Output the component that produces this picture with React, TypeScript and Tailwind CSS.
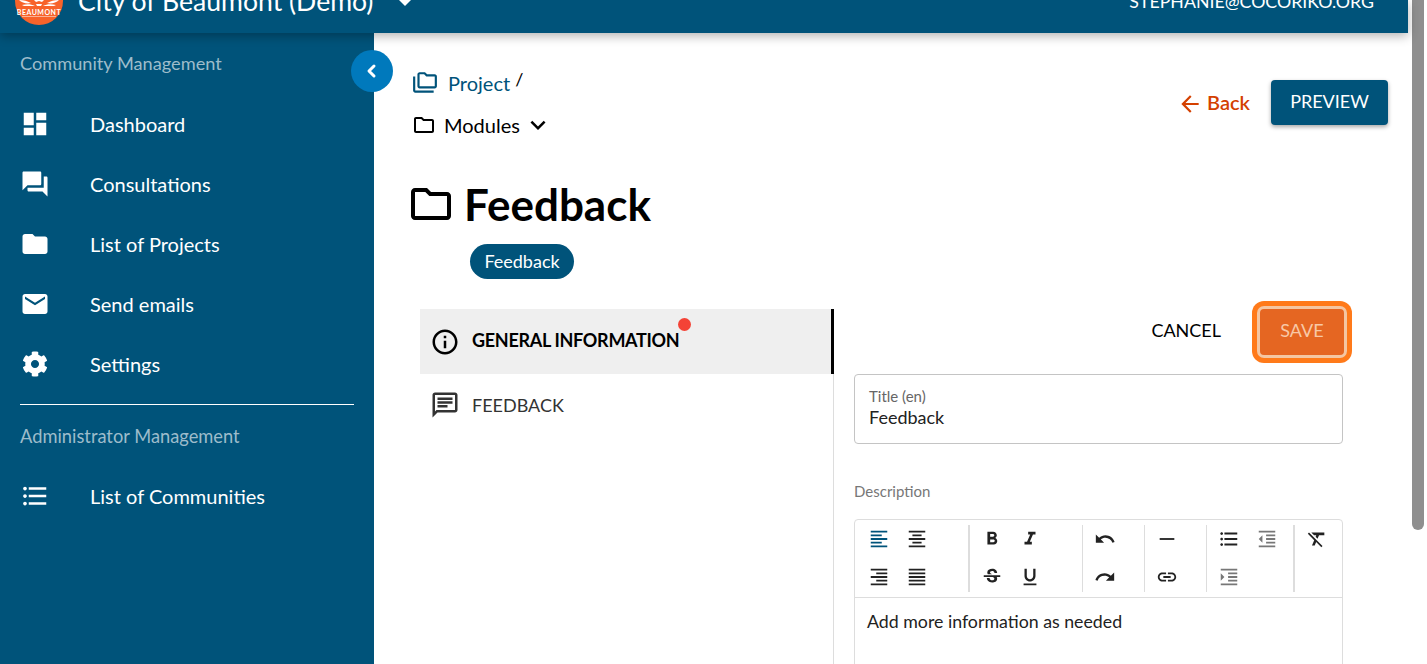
import type { ReactNode } from "react";
import {
  MdArrowBack,
  MdDashboard,
  MdEmail,
  MdExpandMore,
  MdFolder,
  MdForum,
  MdFormatAlignCenter,
  MdFormatAlignJustify,
  MdFormatAlignLeft,
  MdFormatAlignRight,
  MdFormatBold,
  MdFormatClear,
  MdFormatIndentDecrease,
  MdFormatIndentIncrease,
  MdFormatItalic,
  MdFormatListBulleted,
  MdFormatUnderlined,
  MdHorizontalRule,
  MdInfoOutline,
  MdLink,
  MdOutlineChat,
  MdOutlineFolder,
  MdOutlineFolderCopy,
  MdRedo,
  MdStrikethroughS,
  MdUndo,
} from "react-icons/md";
import { FaCog } from "react-icons/fa";

function NavItem({ icon, label }: { icon: ReactNode; label: string }) {
  return (
    <div className="flex h-[60px] items-center text-[20px] text-white">
      <div className="flex w-[90px] pl-5 text-[30px]">{icon}</div>
      {label}
    </div>
  );
}

function Tool({ children, faded }: { children: ReactNode; faded?: boolean }) {
  return (
    <div className={`flex h-[38px] w-[38px] items-center justify-center text-[22px] ${faded ? "text-[#777]" : "text-[#222]"}`}>
      {children}
    </div>
  );
}

function Divider({ thick }: { thick?: boolean }) {
  return <div className={`my-[5px] bg-[#ddd] ${thick ? "w-[2px]" : "w-px"}`} />;
}

function Logo() {
  return (
    <div className="mb-[8px] ml-[15px] flex h-[48px] w-[48px] shrink-0 flex-col items-center justify-end rounded-full bg-[#f7632a] pb-[8px]">
      <svg width="44" height="9" viewBox="0 0 44 9" className="text-white">
        <path d="M2 1c5 0 8 1 12 3-4 1-9 0-12-3zM42 1c-5 0-8 1-12 3 4 1 9 0 12-3zM16 0h12l-3 3-3-1-3 1zM5 6c5-1 9-1 13 1H7zM39 6c-5-1-9-1-13 1h11zM19 5h6l-1 2h-4z" fill="currentColor" />
      </svg>
      <span className="text-[7px] leading-[8px] font-bold tracking-[0.5px] text-white">BEAUMONT</span>
      <span className="h-px w-[34px] bg-white/50" />
    </div>
  );
}

export default function App() {
  return (
    <div className="flex h-[664px] w-[1427px] overflow-hidden bg-white font-['Lato','Liberation_Sans',sans-serif]">
      <div className="flex min-w-0 flex-1 flex-col">
        {/* header is scrolled partly off the page */}
        <header className="relative z-20 mr-[4px] flex h-[33px] shrink-0 items-end overflow-hidden bg-[#00537a] shadow-[0_3px_10px_rgba(0,0,0,0.3)]">
          <Logo />
          <div className="mb-[16px] ml-[15px] text-[26.6px] leading-[32px] whitespace-nowrap text-white">City of Beaumont (Demo)</div>
          <svg width="12" height="6" viewBox="0 0 12 6" className="mb-[27px] ml-[26px] text-white">
            <path d="M0 0h12L6 6z" fill="currentColor" />
          </svg>
          <div className="mb-[22px] ml-auto mr-[34px] text-[17.75px] leading-[20px] whitespace-nowrap text-white">STEPHANIE@COCORIKO.ORG</div>
        </header>

        <div className="flex min-h-0 flex-1">
          <aside className="relative w-[374px] shrink-0 bg-[#00537a]">
            <div className="px-5 pt-[19px] text-[18.2px] leading-[22px] text-[#9dbccb]">Community Management</div>
            <div className="mt-[20px]">
              <NavItem icon={<MdDashboard />} label="Dashboard" />
              <NavItem icon={<MdForum />} label="Consultations" />
              <NavItem icon={<MdFolder />} label="List of Projects" />
              <NavItem icon={<MdEmail />} label="Send emails" />
              <NavItem icon={<FaCog className="ml-[2px] text-[26px]" />} label="Settings" />
            </div>
            <div className="mx-5 mt-[10px] h-px bg-white" />
            <div className="px-5 pt-[20px] text-[18.3px] leading-[22px] text-[#9dbccb]">Administrator Management</div>
            <div className="mt-[19px]">
              <NavItem icon={<MdFormatListBulleted />} label="List of Communities" />
            </div>
            <button className="absolute top-[17px] right-[-19px] z-10 flex h-[42px] w-[42px] items-center justify-center rounded-full bg-[#0079bc] text-white">
              <svg width="20" height="20" viewBox="0 0 20 20" fill="none" stroke="currentColor" strokeWidth="3" strokeLinecap="round" strokeLinejoin="round">
                <path d="M12 5l-5 5 5 5" />
              </svg>
            </button>
          </aside>

          <main className="min-w-0 flex-1 overflow-hidden pl-[37px]">
            <div className="flex justify-between pr-[24px]">
              <div>
                <div className="mt-[36px] flex h-[28px] items-center text-[20px] text-[#00537a]">
                  <MdOutlineFolderCopy className="ml-[1px] text-[26px]" />
                  <span className="ml-[10px]">Project</span>
                  <span className="mb-[8px] ml-[5px] text-[18px] text-black">/</span>
                </div>
                <div className="mt-[14px] flex h-[28px] items-center text-[20px] text-black">
                  <MdOutlineFolder className="ml-[1px] text-[24px]" />
                  <span className="ml-[8px]">Modules</span>
                  <MdExpandMore className="ml-[3px] text-[30px]" />
                </div>
              </div>
              <div className="mt-[47px] flex items-start">
                <div className="mt-[7px] flex items-center text-[20px] font-semibold text-[#d44000]">
                  <MdArrowBack className="mt-[4px] text-[26px]" />
                  <span className="ml-[4px] leading-[26px]">Back</span>
                </div>
                <button className="ml-[21px] h-[45px] w-[117px] rounded-[4px] bg-[#00537a] pb-[2px] text-[18px] text-white shadow-[0_2px_4px_rgba(0,0,0,0.35)]">
                  PREVIEW
                </button>
              </div>
            </div>

            <div className="mt-[35px] flex h-[60px] items-center">
              <MdOutlineFolder className="ml-[-4px] text-[48px]" />
              <h1 className="ml-[9px] text-[44px] font-bold text-black">Feedback</h1>
            </div>
            <div className="mt-[10px] ml-[59px] flex h-[35px] w-[104px] items-center justify-center rounded-full bg-[#00537a] text-[18px] text-white">
              Feedback
            </div>

            <div className="mt-[30px] ml-[9px] flex">
              <div className="w-[414px] shrink-0 border-r border-[#ddd] pb-[300px]">
                <div className="relative -mr-px flex h-[65px] w-[414px] items-center border-r-[3px] border-black bg-[#efefef] pl-[10px] text-[18px] font-bold tracking-[-0.3px] text-black">
                  <MdInfoOutline className="text-[30px]" />
                  <span className="mb-[2px] ml-[12px]">GENERAL INFORMATION</span>
                  <span className="absolute top-[9px] left-[258px] h-[13px] w-[13px] rounded-full bg-[#f44336]" />
                </div>
                <div className="flex h-[62px] items-center pl-[10px] text-[18px] text-[#333]">
                  <MdOutlineChat className="text-[30px]" />
                  <span className="ml-[12px]">FEEDBACK</span>
                </div>
              </div>

              <div className="w-[489px] shrink-0 ml-5">
                <div className="flex h-[65px] items-start justify-end">
                  <span className="mt-[8px] mr-[31px] text-[18px] text-black">CANCEL</span>
                  <button className="mt-[-8px] mr-[-9px] h-[62px] w-[100px] rounded-[12px] bg-[#ff7a1a] p-[5px]">
                    <span className="flex h-full w-full items-center justify-center rounded-[7px] border-[3px] border-[#f4c6a2] bg-[#e56622] pb-[3px] text-[18px] text-[#f8c8a6]">
                      SAVE
                    </span>
                  </button>
                </div>
                <div className="flex h-[70px] flex-col justify-center rounded-[4px] border border-[#c4c4c4] px-[14px] pb-[2px]">
                  <div className="text-[15px] leading-[18px] text-[#666]">Title (en)</div>
                  <div className="text-[18px] leading-[24px] text-[#222]">Feedback</div>
                </div>
                <div className="mt-[38px] text-[15px] leading-[18px] text-[#777]">Description</div>
                <div className="mt-[19px] rounded-t-[4px] border border-[#ddd]">
                  <div className="flex h-[78px] border-b border-[#ddd]">
                    <div className="grid w-[113px] grid-cols-[38px_38px] content-start pl-[5px]">
                      <Tool><MdFormatAlignLeft className="text-[#00537a]" /></Tool>
                      <Tool><MdFormatAlignCenter /></Tool>
                      <Tool><MdFormatAlignRight /></Tool>
                      <Tool><MdFormatAlignJustify /></Tool>
                    </div>
                    <Divider thick />
                    <div className="grid w-[112px] grid-cols-[38px_38px] content-start pl-[3px]">
                      <Tool><MdFormatBold /></Tool>
                      <Tool><MdFormatItalic /></Tool>
                      <Tool><MdStrikethroughS /></Tool>
                      <Tool><MdFormatUnderlined /></Tool>
                    </div>
                    <Divider />
                    <div className="w-[61px] pl-[3px]">
                      <Tool><MdUndo /></Tool>
                      <Tool><MdRedo /></Tool>
                    </div>
                    <Divider />
                    <div className="w-[61px] pl-[3px]">
                      <Tool><MdHorizontalRule /></Tool>
                      <Tool><MdLink /></Tool>
                    </div>
                    <Divider />
                    <div className="grid w-[86px] grid-cols-[38px_38px] content-start pl-[3px]">
                      <Tool><MdFormatListBulleted /></Tool>
                      <Tool faded><MdFormatIndentDecrease /></Tool>
                      <Tool faded><MdFormatIndentIncrease /></Tool>
                    </div>
                    <Divider thick />
                    <div className="pl-[3px]">
                      <Tool><MdFormatClear /></Tool>
                    </div>
                  </div>
                  <div className="h-[120px] px-3 pt-[10px] text-[17.75px] leading-[26px] text-[#222]">
                    Add more information as needed
                  </div>
                </div>
              </div>
            </div>
          </main>
        </div>
      </div>
      <div className="w-[15px] shrink-0 bg-white">
        <div className="h-[530px] w-[12px] rounded-b-[6px] bg-[#8f8f8f]" />
      </div>
    </div>
  );
}
